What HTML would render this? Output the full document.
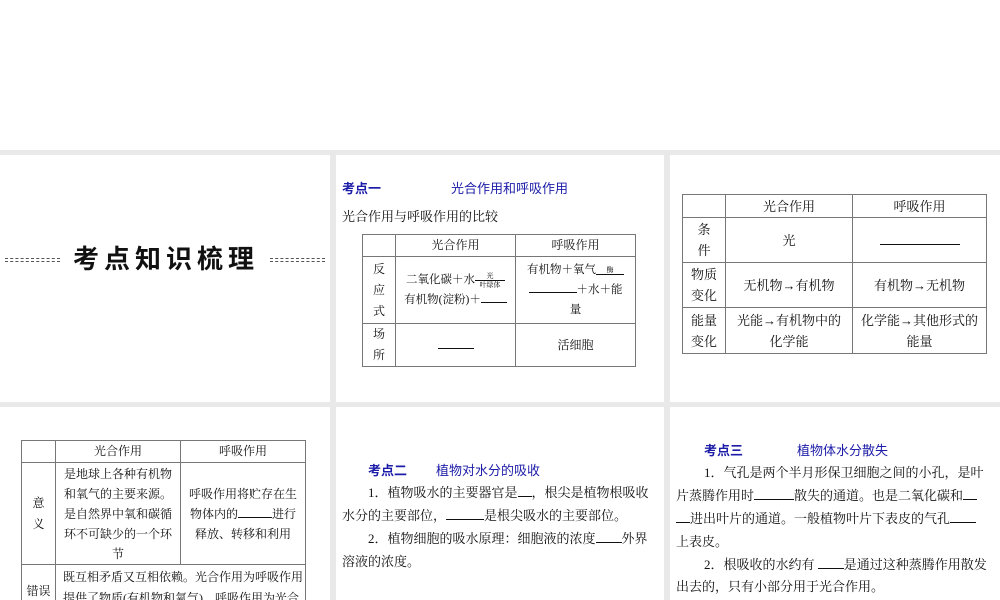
<!DOCTYPE html>
<html style="width:1000px;height:600px;overflow:hidden"><head><meta charset="utf-8"><style>
*{margin:0;padding:0;box-sizing:border-box}
body{width:1000px;height:600px;background:#fff;position:relative;overflow:hidden;font-family:"Liberation Serif","Noto Serif CJK SC",serif;color:#111;font-size:13px}
.bg{position:absolute;left:0;top:150px;width:1000px;height:450px;background:#e9e9e9}
.p{position:absolute;background:#fff;overflow:hidden}
.a{position:absolute;white-space:nowrap;line-height:16px}
.b{color:#1c1ca8;font-weight:bold;font-family:"Liberation Sans","Noto Sans CJK SC",sans-serif;font-size:13px}
.t{position:absolute;border-collapse:collapse}
.t td{border:1px solid #777;text-align:center;vertical-align:middle;line-height:21px;padding:0}
.d{position:absolute;border-top:1px dashed #555;height:4px;border-bottom:1px dashed #555}
u{text-decoration:none;display:inline-block;border-bottom:1px solid #111;height:12px;vertical-align:baseline}
</style></head><body>
<div class="bg"></div>
<div class="p" style="left:0;top:155px;width:330px;height:247px"></div>
<div class="p" style="left:336px;top:155px;width:328px;height:247px"></div>
<div class="p" style="left:670px;top:155px;width:330px;height:247px"></div>
<div class="p" style="left:336px;top:407px;width:328px;height:193px"></div>
<div class="p" style="left:670px;top:407px;width:330px;height:193px"></div>

<div class="d" style="left:5px;top:258px;width:55px"></div>
<div class="d" style="left:270px;top:258px;width:55px"></div>
<div class="a" style="left:73px;top:244px;font-size:26px;line-height:30px;font-weight:bold;letter-spacing:5px;font-family:'Liberation Sans','Noto Sans CJK SC',sans-serif">考点知识梳理</div>

<div class="a b" style="left:342px;top:181px">考点一</div>
<div class="a b" style="left:451px;top:181px;font-weight:normal">光合作用和呼吸作用</div>
<div class="a" style="left:342px;top:209px">光合作用与呼吸作用的比较</div>
<table class="t" style="left:362px;top:234px;width:274px;font-size:12px">
<tr style="height:21px"><td style="width:33px"></td><td style="width:120px">光合作用</td><td>呼吸作用</td></tr>
<tr style="height:67px"><td>反<br>应<br>式</td><td style="line-height:20px;font-size:11.5px">二氧化碳＋水<span style="display:inline-block;width:30px;position:relative;vertical-align:middle;font-size:7px;line-height:8px"><span style="display:block">光</span><span style="display:block;border-top:1px solid #111">叶绿体</span></span><br>有机物(淀粉)＋<u style="width:26px"></u></td><td style="line-height:20px;font-size:11.5px">有机物＋氧气<span style="display:inline-block;width:28px;border-bottom:1px solid #111;font-size:7px;line-height:8px;vertical-align:middle">酶</span><br><u style="width:48px"></u>＋水＋能<br>量</td></tr>
<tr style="height:41px"><td>场<br>所</td><td><u style="width:36px"></u></td><td>活细胞</td></tr>
</table>

<table class="t" style="left:682px;top:194px;width:305px">
<tr style="height:23px"><td style="width:43px"></td><td style="width:127px">光合作用</td><td>呼吸作用</td></tr>
<tr style="height:45px"><td>条<br>件</td><td>光</td><td><u style="width:80px"></u></td></tr>
<tr style="height:45px"><td>物质<br>变化</td><td>无机物→有机物</td><td>有机物→无机物</td></tr>
<tr style="height:46px"><td>能量<br>变化</td><td>光能→有机物中的<br>化学能</td><td>化学能→其他形式的<br>能量</td></tr>
</table>

<div class="p" style="left:0;top:407px;width:330px;height:193px">
<table class="t" style="left:21px;top:33px;width:285px;font-size:12px">
<tr style="height:21px"><td style="width:34px"></td><td style="width:125px">光合作用</td><td>呼吸作用</td></tr>
<tr style="height:102px"><td>意<br>义</td><td style="line-height:20px">是地球上各种有机物<br>和氧气的主要来源。<br>是自然界中氧和碳循<br>环不可缺少的一个环<br>节</td><td style="line-height:20px">呼吸作用将贮存在生<br>物体内的<u style="width:34px"></u>进行<br>释放、转移和利用</td></tr>
<tr style="height:60px"><td style="vertical-align:top;padding-top:16px">错误</td><td colspan="2" style="text-align:left;vertical-align:top;padding:2px 0 0 7px;line-height:21px">既互相矛盾又互相依赖。光合作用为呼吸作用<br>提供了物质(有机物和氧气)，呼吸作用为光合</td></tr>
</table>
</div>

<div class="a b" style="left:368px;top:463px">考点二</div>
<div class="a b" style="left:436px;top:463px;font-weight:normal">植物对水分的吸收</div>
<div class="a" style="left:368px;top:485px">1．植物吸水的主要器官是<u style="width:14px"></u>，根尖是植物根吸收</div>
<div class="a" style="left:342px;top:508px">水分的主要部位，<u style="width:38px"></u>是根尖吸水的主要部位。</div>
<div class="a" style="left:368px;top:531px">2．植物细胞的吸水原理：细胞液的浓度<u style="width:26px"></u>外界</div>
<div class="a" style="left:342px;top:554px">溶液的浓度。</div>

<div class="a b" style="left:704px;top:443px">考点三</div>
<div class="a b" style="left:797px;top:443px;font-weight:normal">植物体水分散失</div>
<div class="a" style="left:704px;top:465px">1．气孔是两个半月形保卫细胞之间的小孔，是叶</div>
<div class="a" style="left:676px;top:488px">片蒸腾作用时<u style="width:40px"></u>散失的通道。也是二氧化碳和<u style="width:14px"></u></div>
<div class="a" style="left:676px;top:511px"><u style="width:14px"></u>进出叶片的通道。一般植物叶片下表皮的气孔<u style="width:26px"></u></div>
<div class="a" style="left:676px;top:534px">上表皮。</div>
<div class="a" style="left:704px;top:557px">2．根吸收的水约有 <u style="width:26px"></u>是通过这种蒸腾作用散发</div>
<div class="a" style="left:676px;top:579px">出去的，只有小部分用于光合作用。</div>
</body></html>
